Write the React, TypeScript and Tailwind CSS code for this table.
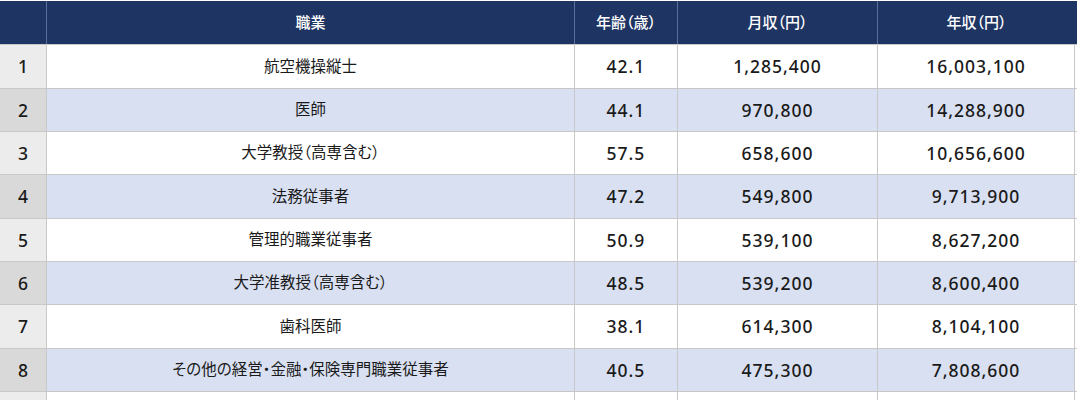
import React from "react";

const rows = [
  ["1", "航空機操縦士", "42.1", "1,285,400", "16,003,100"],
  ["2", "医師", "44.1", "970,800", "14,288,900"],
  ["3", "大学教授（高専含む）", "57.5", "658,600", "10,656,600"],
  ["4", "法務従事者", "47.2", "549,800", "9,713,900"],
  ["5", "管理的職業従事者", "50.9", "539,100", "8,627,200"],
  ["6", "大学准教授（高専含む）", "48.5", "539,200", "8,600,400"],
  ["7", "歯科医師", "38.1", "614,300", "8,104,100"],
  ["8", "その他の経営・金融・保険専門職業従事者", "40.5", "475,300", "7,808,600"],
  ["", "", "", "", ""],
];

const heights = ["h-[44px]", "h-[43px]", "h-[43px]", "h-[44px]", "h-[43px]", "h-[43px]", "h-[44px]", "h-[43px]", "h-[43px]"];

const cols = "grid grid-cols-[47px_528px_103px_200px_197px]";

export default function App() {
  return (
    <div className="w-[1080px] h-[400px] overflow-hidden bg-white font-['Noto_Sans','Noto_Sans_CJK_JP',sans-serif] [font-feature-settings:'palt']">
      <div className="pt-[1px] w-[1077px]">
        <div className={`${cols} h-[43px] bg-[#1e3463] text-white text-[15px] font-medium`}>
          <div className="border-r border-[#5a6f9a]" />
          <div className="flex items-center justify-center border-r border-[#5a6f9a]">職業</div>
          <div className="flex items-center justify-center border-r border-[#5a6f9a]">年齢（歳）</div>
          <div className="flex items-center justify-center border-r border-[#5a6f9a]">月収（円）</div>
          <div className="flex items-center justify-center">年収（円）</div>
        </div>
        {rows.map((r, i) => {
          const even = i % 2 === 1;
          const body = even ? "bg-[#d9e0f1]" : "bg-white";
          const first = even ? "bg-[#d9d9d9]" : "bg-[#ececec]";
          return (
            <div key={i} className={`${cols} ${heights[i]} border-t border-[#c8c8c8] text-[#1a1a1a]`}>
              <div className={`${first} border-r border-[#c8c8c8] flex items-center justify-center text-[17.5px] font-medium`}>{r[0]}</div>
              <div className={`${body} border-r border-[#c8c8c8] flex items-center justify-center text-[15.5px]`}>{r[1]}</div>
              <div className={`${body} border-r border-[#c8c8c8] flex items-center justify-center text-[17.5px] font-medium tracking-[1px]`}>{r[2]}</div>
              <div className={`${body} border-r border-[#c8c8c8] flex items-center justify-center text-[17.5px] font-medium tracking-[1px]`}>{r[3]}</div>
              <div className={`${body} border-r border-[#c8c8c8] flex items-center justify-center text-[17.5px] font-medium tracking-[1px]`}>{r[4]}</div>
            </div>
          );
        })}
      </div>
    </div>
  );
}
